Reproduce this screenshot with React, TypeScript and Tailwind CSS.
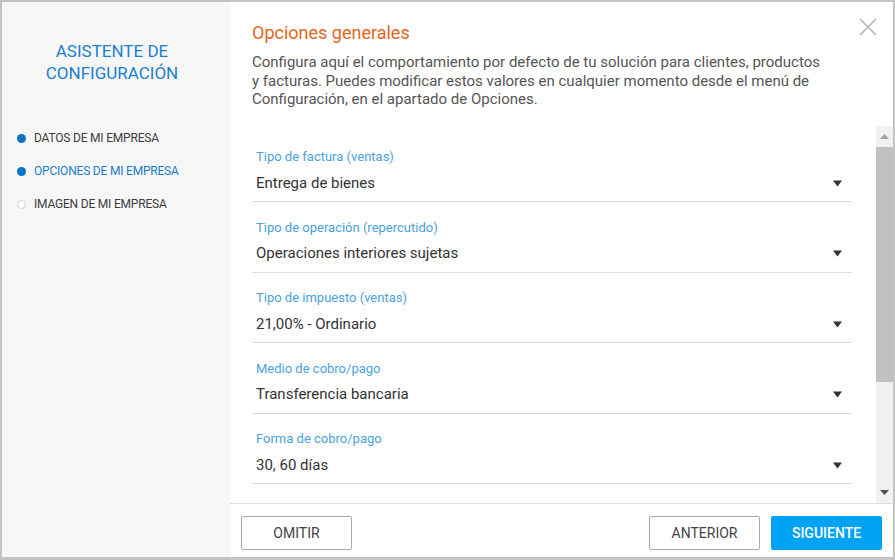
import React from 'react';

const steps = [
  { label: 'DATOS DE MI EMPRESA', done: true, active: false },
  { label: 'OPCIONES DE MI EMPRESA', done: true, active: true },
  { label: 'IMAGEN DE MI EMPRESA', done: false, active: false },
];

const fields = [
  { label: 'Tipo de factura (ventas)', value: 'Entrega de bienes' },
  { label: 'Tipo de operación (repercutido)', value: 'Operaciones interiores sujetas' },
  { label: 'Tipo de impuesto (ventas)', value: '21,00% - Ordinario' },
  { label: 'Medio de cobro/pago', value: 'Transferencia bancaria' },
  { label: 'Forma de cobro/pago', value: '30, 60 días' },
];

function Caret() {
  return (
    <svg width="9" height="7" viewBox="0 0 9 7" className="mr-[10px]">
      <path d="M0 0.5 H9 L4.5 6.5 Z" fill="#333" />
    </svg>
  );
}

export default function App() {
  return (
    <div
      className="flex h-[560px] w-[895px] border-x-2 border-t-2 border-b-[3px] border-[#c3c3c3] bg-white"
      style={{ fontFamily: 'Roboto, "Noto Sans", sans-serif' }}
    >
      {/* Sidebar */}
      <aside className="w-[228px] shrink-0 bg-[#f7f7f7]">
        <h1 className="mt-[38px] pr-[8px] text-center text-[17px] leading-[22px] text-[#1b7fcf]">
          ASISTENTE DE
          <br />
          CONFIGURACIÓN
        </h1>
        <ul className="mt-[45px] flex flex-col gap-[15px] pl-[15px]">
          {steps.map((s) => (
            <li key={s.label} className="flex h-[18px] items-center gap-[8px]">
              <span
                className={
                  s.done
                    ? 'h-[9px] w-[9px] rounded-full bg-[#0a74c4]'
                    : 'h-[9px] w-[9px] rounded-full border border-[#d0d0d0] bg-white'
                }
              />
              <span
                className={
                  s.active
                    ? 'text-[12px] tracking-[-0.2px] text-[#1a7cc7]'
                    : 'text-[12px] tracking-[-0.2px] text-[#3c3c3c]'
                }
              >
                {s.label}
              </span>
            </li>
          ))}
        </ul>
      </aside>

      {/* Main */}
      <main className="flex min-w-0 flex-1 flex-col">
        <header className="relative h-[124px] shrink-0 pl-[22px] pt-[18px]">
          <h2 className="text-[18px] leading-[26px] text-[#e5661d]">Opciones generales</h2>
          <p className="mt-[7px] text-[15px] leading-[18.5px] text-[#555]">
            Configura aquí el comportamiento por defecto de tu solución para clientes, productos
            <br />
            y facturas. Puedes modificar estos valores en cualquier momento desde el menú de
            <br />
            Configuración, en el apartado de Opciones.
          </p>
          <button className="absolute right-[15px] top-[15px]" aria-label="Cerrar">
            <svg width="20" height="20" viewBox="0 0 20 20">
              <path d="M2 2 L18 18 M18 2 L2 18" stroke="#b4b4b4" strokeWidth="1.6" />
            </svg>
          </button>
        </header>

        <div className="flex min-h-0 flex-1">
          <div className="flex-1 overflow-hidden pl-[22px] pr-[24px] pt-[22px]">
            <div className="flex flex-col gap-[16.5px]">
              {fields.map((f) => (
                <div key={f.label} className="border-b border-[#dcdcdc] pb-[7px]">
                  <div className="pl-[4px] text-[13px] leading-[18px] text-[#4ba2dd]">{f.label}</div>
                  <div className="mt-[6px] flex h-[22px] items-center justify-between pl-[4px]">
                    <span className="text-[15px] text-[#333]">{f.value}</span>
                    <Caret />
                  </div>
                </div>
              ))}
            </div>
          </div>
          {/* Scrollbar */}
          <div className="flex w-[17px] shrink-0 flex-col bg-[#f1f1f1]">
            <div className="flex h-[21px] items-center justify-center">
              <svg width="9" height="5" viewBox="0 0 9 5">
                <path d="M0 5 H9 L4.5 0 Z" fill="#a3a3a3" />
              </svg>
            </div>
            <div className="h-[235px] bg-[#c1c1c1]" />
            <div className="flex-1" />
            <div className="flex h-[21px] items-center justify-center">
              <svg width="9" height="5" viewBox="0 0 9 5">
                <path d="M0 0 H9 L4.5 5 Z" fill="#505050" />
              </svg>
            </div>
          </div>
        </div>

        <footer className="flex h-[54px] shrink-0 items-start justify-between border-t border-[#dedede] px-[11px] pt-[12px]">
          <button className="h-[34px] w-[111px] rounded-[2px] border border-[#a9a9a9] bg-white text-[14px] text-[#444]">
            OMITIR
          </button>
          <div className="flex gap-[11px]">
            <button className="h-[34px] w-[111px] rounded-[2px] border border-[#a9a9a9] bg-white text-[14px] text-[#444]">
              ANTERIOR
            </button>
            <button className="h-[34px] w-[111px] rounded-[2px] bg-[#00a3f3] text-[14px] font-medium text-white">
              SIGUIENTE
            </button>
          </div>
        </footer>
      </main>
    </div>
  );
}
